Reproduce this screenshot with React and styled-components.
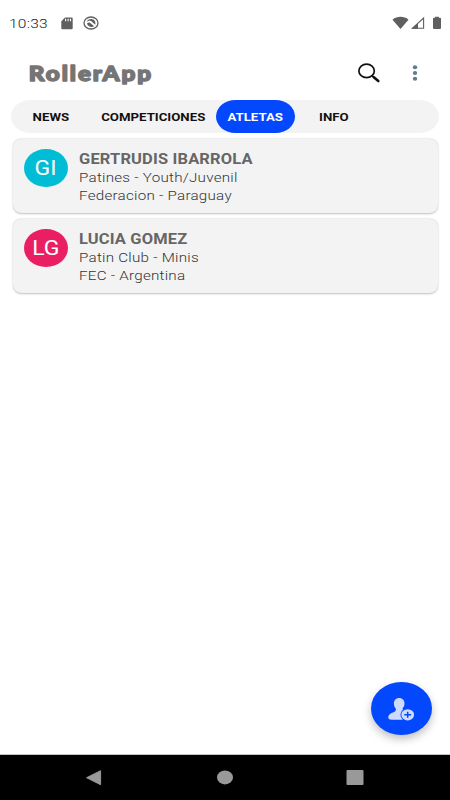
import styled, { createGlobalStyle } from "styled-components";

const athletes = [
  {
    initials: "GI",
    color: "#00bcd4",
    name: "GERTRUDIS IBARROLA",
    club: "Patines - Youth/Juvenil",
    federation: "Federacion - Paraguay",
  },
  {
    initials: "LG",
    color: "#e91e63",
    name: "LUCIA GOMEZ",
    club: "Patin Club - Minis",
    federation: "FEC - Argentina",
  },
];

const App = () => {
  return (
    <>
      <GlobalStyle />
      <Screen>
        <StatusBar>
          <Clock>10:33</Clock>
          <StatusIcons>
            <SdCardIcon />
            <SyncIcon />
          </StatusIcons>
          <SystemIcons>
            <WifiIcon />
            <SignalIcon />
            <BatteryIcon />
          </SystemIcons>
        </StatusBar>
        <Toolbar>
          <Logo />
          <Actions>
            <SearchIcon />
            <MoreIcon />
          </Actions>
        </Toolbar>
        <Tabs>
          <Tab $width={79}>
            <TabLabel>NEWS</TabLabel>
          </Tab>
          <Tab $width={126}>
            <TabLabel>COMPETICIONES</TabLabel>
          </Tab>
          <Tab $width={78.5} $active>
            <TabLabel>ATLETAS</TabLabel>
          </Tab>
          <Tab $width={79}>
            <TabLabel>INFO</TabLabel>
          </Tab>
        </Tabs>
        <List>
          {athletes.map((athlete) => (
            <Card key={athlete.name}>
              <Avatar $color={athlete.color}>
                <Initials>{athlete.initials}</Initials>
              </Avatar>
              <Details>
                <Name>{athlete.name}</Name>
                <Line>{athlete.club}</Line>
                <Line>{athlete.federation}</Line>
              </Details>
            </Card>
          ))}
        </List>
        <AddButton aria-label="add">
          <AddPersonIcon />
        </AddButton>
        <NavigationBar>
          <svg width="18" height="18" viewBox="0 0 18 18">
            <path d="M1.6 8.7 15.6 1.7V15.7Z" fill="#999" stroke="#999" strokeLinejoin="round" />
          </svg>
          <svg width="18" height="18" viewBox="0 0 18 18">
            <ellipse cx="9" cy="8.4" rx="8" ry="7" fill="#999" />
          </svg>
          <svg width="18" height="18" viewBox="0 0 18 18">
            <rect x="0.5" y="1.1" width="17" height="15" rx="1" fill="#999" />
          </svg>
        </NavigationBar>
      </Screen>
    </>
  );
};
export default App;

const Logo = () => (
  <svg width="126" height="28" viewBox="0 0 126 28">
    <text
      transform="scale(1.17 1)"
      x="1.6"
      y="21.6"
      textLength="104.5"
      lengthAdjust="spacing"
      fontFamily="Lato, sans-serif"
      fontWeight="900"
      fontSize="20.7"
      fill="#757575"
      stroke="#757575"
      strokeWidth="1.5"
      strokeLinejoin="round"
    >
      RollerApp
    </text>
  </svg>
);

const SdCardIcon = () => (
  <svg width="12" height="13" viewBox="0 0 12 13">
    <path d="M4 .5H10.6Q11.7 .5 11.7 1.5V11.2Q11.7 12.3 10.6 12.3H1.3Q.3 12.3 .3 11.2V4.3Z" fill="#5f5f5f" />
    <path d="M4.6 1.7V4.2M7.1 1.7V4.2M9.5 1.7V4.2" stroke="#fff" strokeWidth="1.1" />
  </svg>
);

const SyncIcon = () => (
  <svg width="16" height="14" viewBox="0 0 16 14">
    <ellipse cx="8" cy="7" rx="7" ry="6" fill="none" stroke="#5f5f5f" strokeWidth="1.3" />
    <path d="M3.4 6.2C4.4 3.8 6.2 3 8.4 3.1C11.2 3.2 13 5.6 12.3 8.8L8 5C6.4 4.3 4.8 4.8 3.4 6.2Z" fill="#5f5f5f" />
    <path d="M4 7.6C4.8 10.9 8.6 11.8 11.2 10.2L7 6.8Q5.4 6.2 4 7.6Z" fill="#5f5f5f" />
  </svg>
);

const WifiIcon = () => (
  <svg width="17" height="14" viewBox="0 0 17 14">
    <path d="M.5 3.7C5-.1 12 -.1 16.5 3.7L8.5 13Z" fill="#5f5f5f" />
  </svg>
);

const SignalIcon = () => (
  <svg width="14" height="14" viewBox="0 0 14 14">
    <path d="M1.3 12.3 12.6 2V12.3Z" fill="#fff" stroke="#5f5f5f" strokeWidth="1.1" />
    <path d="M.5 12.8 7 7V12.8Z" fill="#5f5f5f" />
  </svg>
);

const BatteryIcon = () => (
  <svg width="8" height="14" viewBox="0 0 8 14">
    <path d="M2 1.2H2.2V.7H5.8V1.7H7Q8 1.7 8 2.6V12Q8 13 7 13H1Q0 13 0 12V2.6Q0 1.7 1 1.7H2Z" fill="#5f5f5f" />
  </svg>
);

const SearchIcon = () => (
  <svg width="24" height="22" viewBox="0 0 24 22">
    <ellipse cx="9.6" cy="8.9" rx="7.7" ry="6.8" fill="none" stroke="#111" strokeWidth="1.7" />
    <path d="M14.5 13.3 17 15.3" stroke="#111" strokeWidth="1.6" />
    <path d="M16.8 15.2 21.3 19" stroke="#111" strokeWidth="2.6" strokeLinecap="round" />
  </svg>
);

const MoreIcon = () => (
  <svg width="6" height="18" viewBox="0 0 6 18">
    <ellipse cx="3" cy="3.3" rx="2.2" ry="2" fill="#607d8b" />
    <ellipse cx="3" cy="9" rx="2.2" ry="2" fill="#607d8b" />
    <ellipse cx="3" cy="14.7" rx="2.2" ry="2" fill="#607d8b" />
  </svg>
);

const AddPersonIcon = () => (
  <svg width="28" height="24" viewBox="0 0 28 24">
    <path
      d="M12.2 .9C15.4 .9 17.5 3.2 17.5 6.2C17.5 8.4 16.8 10.1 15.6 11.3C15.5 13.5 17.5 14.3 20 15V22.7H4.8C2.7 22.7 1.3 22.1 1.3 20.5C1.3 17.2 4.6 16 7 15C8.7 14.3 9 13.4 8.8 11.5C7.5 10.2 6.9 8.4 6.9 6.3C6.9 3 9.1 .9 12.2 .9Z"
      fill="#ccdafd"
    />
    <ellipse cx="20.7" cy="17.8" rx="7.3" ry="6.5" fill="#0448fe" />
    <ellipse cx="20.7" cy="17.8" rx="6.4" ry="5.6" fill="#ccdafd" />
    <path d="M17.3 17.8H24.1M20.7 14.8V20.8" stroke="#0448fe" strokeWidth="1.5" />
  </svg>
);

const GlobalStyle = createGlobalStyle`
  * {
    box-sizing: border-box;
  }
  body {
    margin: 0;
    background: #fff;
    font-family: Roboto, sans-serif;
  }
`;

const Screen = styled.div`
  width: 450px;
  height: 800px;
  display: flex;
  flex-direction: column;
  position: relative;
  overflow: hidden;
  background: #fff;
`;

const StatusBar = styled.div`
  height: 46px;
  display: flex;
  align-items: center;
  padding: 0 9px 0 8.5px;
`;

/* labels are drawn wider than the font's own proportions */
const Wide = styled.span`
  display: inline-block;
  white-space: nowrap;
  transform: scaleX(1.15);
`;

const Clock = styled(Wide)`
  width: 52.5px;
  font-size: 13.5px;
  font-weight: 300;
  letter-spacing: 0.2px;
  line-height: 16px;
  color: #222;
  transform-origin: left;
`;

const StatusIcons = styled.div`
  display: flex;
  align-items: center;
  gap: 10px;
`;

const SystemIcons = styled.div`
  display: flex;
  align-items: center;
  gap: 2px;
  margin-left: auto;

  svg:last-child {
    margin-left: 6px;
  }
`;

const Toolbar = styled.header`
  height: 53.5px;
  display: flex;
  align-items: center;
  justify-content: space-between;
  padding: 0 32px 0 27px;
`;

const Actions = styled.div`
  display: flex;
  align-items: center;
  gap: 31px;
`;

const Tabs = styled.nav`
  height: 33.5px;
  flex: none;
  display: flex;
  margin: 0 11px;
  border-radius: 20px / 17px;
  background: #f3f3f3;
`;

const Tab = styled.div`
  width: ${(props) => props.$width}px;
  display: flex;
  align-items: center;
  justify-content: center;
  padding-top: 1px;
  border-radius: 20px / 17px;
  color: ${(props) => (props.$active ? "#fff" : "#111")};
  background: ${(props) => (props.$active ? "#0448fe" : "transparent")};
`;

const TabLabel = styled(Wide)`
  font-size: 11.5px;
  font-weight: 700;
`;

const List = styled.main`
  flex: 1;
  display: flex;
  flex-direction: column;
  gap: 6px;
  padding: 6px 12.5px;
`;

const Card = styled.article`
  height: 74px;
  display: flex;
  gap: 11px;
  padding: 10px 11.5px;
  border-radius: 9px / 8px;
  background: #f3f3f3;
  box-shadow: 0 0.5px 2px rgba(0, 0, 0, 0.25);
`;

const Avatar = styled.div`
  width: 44px;
  height: 38px;
  display: flex;
  align-items: center;
  justify-content: center;
  border-radius: 50%;
  background: ${(props) => props.$color};
`;

const Initials = styled(Wide)`
  font-size: 20px;
  line-height: 24px;
  color: #fff;
`;

const Details = styled.div`
  display: flex;
  flex-direction: column;
  align-items: flex-start;
  padding-top: 1px;
`;

const Name = styled(Wide)`
  margin-bottom: 1px;
  font-size: 14.3px;
  font-weight: 700;
  letter-spacing: 0.15px;
  line-height: 18px;
  color: #666;
  transform-origin: left;
`;

const Line = styled(Wide)`
  font-size: 13.2px;
  font-weight: 300;
  letter-spacing: 0.22px;
  line-height: 18px;
  color: #333;
  transform-origin: left;
`;

const AddButton = styled.button`
  position: absolute;
  right: 18px;
  bottom: 65px;
  width: 61px;
  height: 53px;
  display: flex;
  align-items: center;
  justify-content: center;
  padding: 0 1px 0 0;
  border: none;
  border-radius: 50%;
  background: #0448fe;
  box-shadow: 0 4px 8px rgba(0, 0, 0, 0.25);
`;

const NavigationBar = styled.footer`
  height: 46px;
  display: flex;
  align-items: center;
  justify-content: space-between;
  padding: 0 86px 0 85px;
  border-top: 1px solid #c4c4c4;
  background: #000;
`;
